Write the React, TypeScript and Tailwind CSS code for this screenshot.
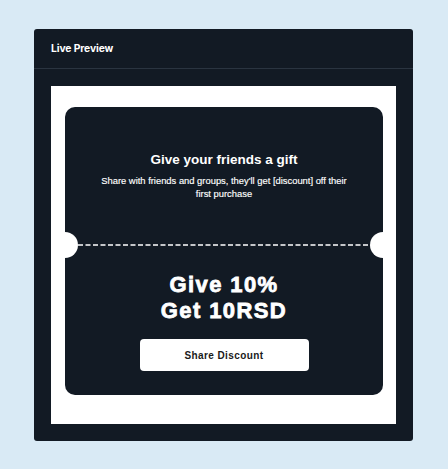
import React from "react";

export default function App() {
  return (
    <div className="w-[448px] min-h-[469px] bg-[#d9eaf5] pt-[29px] pl-[34px] pb-[28px]">
      <div className="w-[379px] h-[412px] bg-[#121a24] rounded-[3px] flex flex-col">
        <div className="h-[40px] shrink-0 border-b border-[#2a3440] flex items-center px-[17px]">
          <span className="text-white text-[10.3px] font-bold tracking-[-0.1px] [font-family:Inter,'Noto_Sans',sans-serif]">
            Live Preview
          </span>
        </div>
        <div className="flex-1 p-[17px] flex">
          <div className="flex-1 bg-white pt-[21px] pb-[29px] pl-[14px] pr-[13px] flex">
            <div className="relative flex-1 rounded-[10px] bg-[#121a24] flex flex-col [font-family:'Liberation_Sans',Arial,sans-serif]">
              <div className="h-[137px] shrink-0 pt-[45px] flex flex-col items-center text-white text-center">
                <div className="text-[13.5px] leading-[16px] font-bold">Give your friends a gift</div>
                <div className="mt-[6px] text-[9.4px] leading-[13px] [-webkit-text-stroke:0.15px_white]">
                  Share with friends and groups, they'll get [discount] off their
                  <br />
                  first purchase
                </div>
              </div>
              <div className="h-[2px] shrink-0 px-[13px]">
                <svg width="100%" height="2" className="block">
                  <line x1="0" y1="1" x2="100%" y2="1" stroke="white" strokeWidth="1.3" strokeDasharray="5 2.5" />
                </svg>
              </div>
              <div className="absolute left-[-13px] top-[125px] w-[26px] h-[26px] rounded-full bg-white" />
              <div className="absolute right-[-13px] top-[125px] w-[26px] h-[26px] rounded-full bg-white" />
              <div className="pt-[26px] flex flex-col items-center">
                <div className="text-white text-[22px] leading-[26px] font-bold tracking-[1.4px] text-center [-webkit-text-stroke:0.8px_white]">
                  Give 10%
                  <br />
                  Get 10RSD
                </div>
                <button className="mt-[15px] w-[169px] h-[32px] rounded-[4px] bg-white text-[#1a1a1a] text-[10px] font-bold tracking-[0.4px]">
                  Share Discount
                </button>
              </div>
            </div>
          </div>
        </div>
      </div>
    </div>
  );
}
